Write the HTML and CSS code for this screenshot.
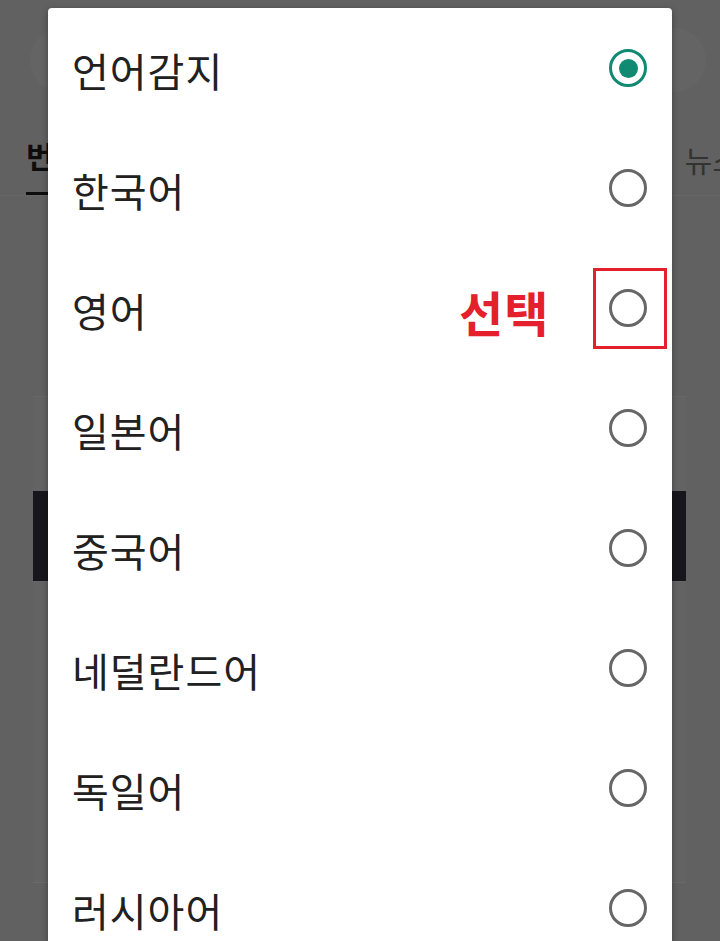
FILE: index.html
```html
<!DOCTYPE html>
<html lang="ko">
<head>
<meta charset="utf-8">
<link rel="stylesheet" href="styles.css">
</head>
<body>
<div class="page">
  <div class="bg-top">
    <div class="bg-circle bg-circle-l"></div>
    <div class="bg-circle bg-circle-r"></div>
  </div>
  <div class="bg-tabs">
    <div class="bg-tab active">번역</div>
    <div class="bg-tab">뉴스</div>
  </div>
  <div class="bg-body">
    <div class="bg-card"></div>
    <div class="bg-bar"></div>
    <div class="bg-card bg-card-low"></div>
  </div>
</div>

<div class="dialog">
  <div class="row"><span class="label">언어감지</span><span class="radio checked"></span></div>
  <div class="row"><span class="label">한국어</span><span class="radio"></span></div>
  <div class="row">
    <span class="label">영어</span>
    <span class="note">선택</span>
    <span class="radio"></span>
    <span class="mark"></span>
  </div>
  <div class="row"><span class="label">일본어</span><span class="radio"></span></div>
  <div class="row"><span class="label">중국어</span><span class="radio"></span></div>
  <div class="row"><span class="label">네덜란드어</span><span class="radio"></span></div>
  <div class="row"><span class="label">독일어</span><span class="radio"></span></div>
  <div class="row"><span class="label">러시아어</span><span class="radio"></span></div>
</div>
</body>
</html>
```
FILE: styles.css
```css
html, body {
  margin: 0;
  padding: 0;
}
body {
  width: 720px;
  height: 941px;
  overflow: hidden;
  background: #616161;
  font-family: "Noto Sans CJK KR", "Noto Sans", sans-serif;
  position: relative;
}
.page {
  display: flex;
  flex-direction: column;
  height: 941px;
  overflow: hidden;
}
.bg-top {
  height: 120px;
  display: flex;
  justify-content: space-between;
  padding: 28px 14px 0 30px;
  box-sizing: border-box;
}
.bg-circle {
  width: 64px;
  height: 64px;
  border-radius: 50%;
  background: #646464;
}
.bg-tabs {
  height: 76px;
  display: flex;
  justify-content: space-between;
  align-items: center;
  padding: 0 0 0 26px;
  border-bottom: 1px solid #666;
  box-sizing: border-box;
  overflow: hidden;
}
.bg-tab {
  font-size: 30px;
  color: #333;
  line-height: 1;
  padding: 18px 0 16px;
  white-space: nowrap;
}
.bg-tab.active {
  color: #0d0d0d;
  font-weight: 700;
  border-bottom: 3px solid #0d0d0d;
  align-self: flex-end;
  padding-bottom: 22px;
}
.bg-tab:last-child {
  margin-right: -20px;
}
.bg-body {
  flex: 1;
  display: flex;
  flex-direction: column;
  padding: 200px 34px 0 33px;
}
.bg-card {
  height: 94px;
  background: #636363;
  border-top: 1px solid #676767;
}
.bg-bar {
  height: 90px;
  background: #16161c;
}
.bg-card-low {
  height: 300px;
  border-bottom: 1px solid #6a6a6a;
}

.dialog {
  position: absolute;
  top: 8px;
  left: 48px;
  width: 624px;
  height: 933px;
  overflow: hidden;
  background: #fff;
  border-radius: 4px 4px 0 0;
  box-shadow: 0 2px 6px rgba(0,0,0,0.35);
}
.row {
  position: relative;
  height: 120px;
  display: flex;
  align-items: center;
  padding: 0 25px 0 24px;
}
.label {
  flex: 1;
  font-size: 40px;
  letter-spacing: 1px;
  color: #212121;
  line-height: 1;
  padding-top: 4px;
}
.radio {
  width: 38px;
  height: 38px;
  box-sizing: border-box;
  border: 3.5px solid #676767;
  border-radius: 50%;
  display: flex;
  align-items: center;
  justify-content: center;
}
.radio.checked {
  border-color: #108a72;
}
.radio.checked::after {
  content: "";
  width: 19px;
  height: 19px;
  border-radius: 50%;
  background: #108a72;
}
.note {
  position: absolute;
  left: 411px;
  top: 50%;
  transform: translateY(-50%);
  font-size: 48px;
  letter-spacing: 1px;
  font-weight: 700;
  color: #e3202b;
  line-height: 1;
  margin-top: 3px;
}
.mark {
  position: absolute;
  left: 545px;
  top: 20px;
  width: 74px;
  height: 81px;
  box-sizing: border-box;
  border: 3px solid #e3202b;
}
```
